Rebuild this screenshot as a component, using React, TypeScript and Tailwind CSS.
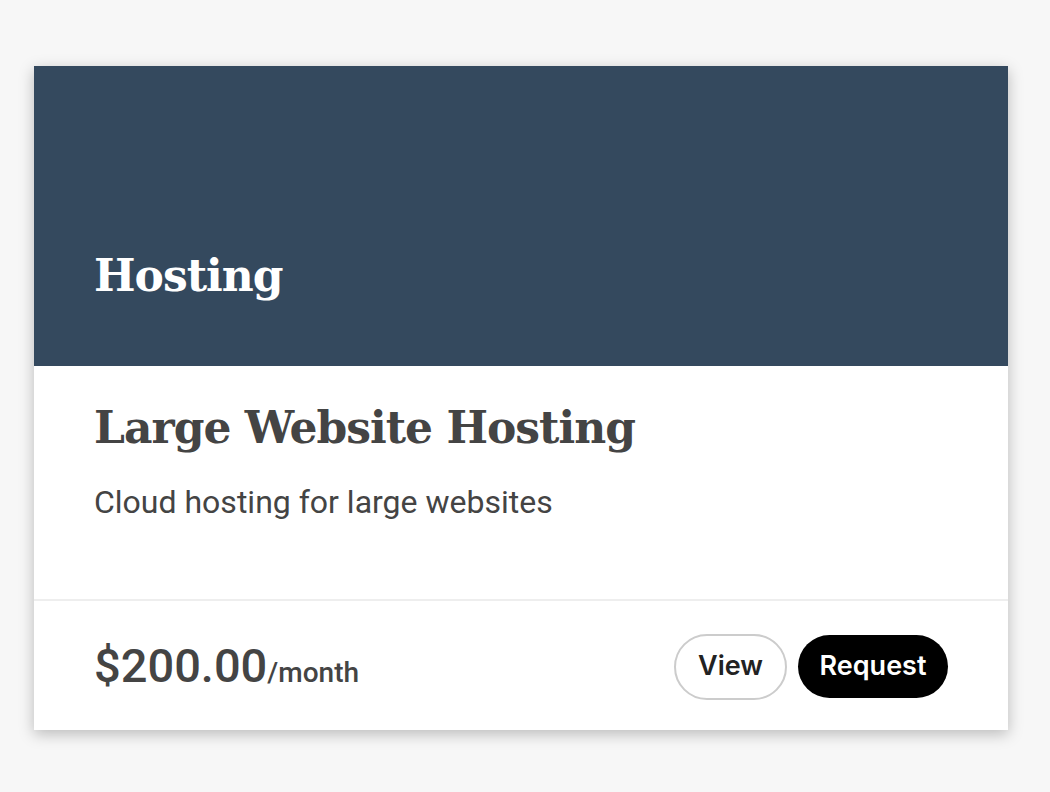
export default function App() {
  return (
    <div className="min-h-screen bg-[#f7f7f7] pt-[66px] pl-[34px]">
      <div className="w-[974px] bg-white shadow-[0_4px_14px_rgba(0,0,0,0.25)]">
        {/* header */}
        <div className="h-[300px] bg-[#34495e] flex flex-col justify-end px-[60px] pb-[68px]">
          <h2 className="text-white text-[44px] leading-none font-bold tracking-[-1px] font-['DejaVu_Serif',serif]">
            Hosting
          </h2>
        </div>

        {/* body */}
        <div className="px-[60px] pt-[40px] h-[235px] border-b-2 border-[#eeeeee]">
          <h3 className="text-[#444444] text-[44px] leading-none font-bold tracking-[-1px] font-['DejaVu_Serif',serif]">
            Large Website Hosting
          </h3>
          <p className="mt-[36px] text-[#444444] text-[32px] leading-none font-['Roboto',sans-serif]">
            Cloud hosting for large websites
          </p>
        </div>

        {/* footer */}
        <div className="h-[129px] px-[60px] flex items-center justify-between">
          <p className="text-[#444444] font-['Roboto',sans-serif] font-medium">
            <span className="text-[47px] leading-none">$200.00</span>
            <span className="text-[28px] leading-none">/month</span>
          </p>
          <div className="flex items-center gap-[11px] pt-[2px] font-['Inter',sans-serif] font-semibold">
            <button className="w-[113px] h-[66px] rounded-full border-2 border-[#cccccc] bg-white text-[#222222] text-[27px]">
              View
            </button>
            <button className="w-[150px] h-[63px] rounded-full bg-black text-white text-[27px]">
              Request
            </button>
          </div>
        </div>
      </div>
    </div>
  );
}
